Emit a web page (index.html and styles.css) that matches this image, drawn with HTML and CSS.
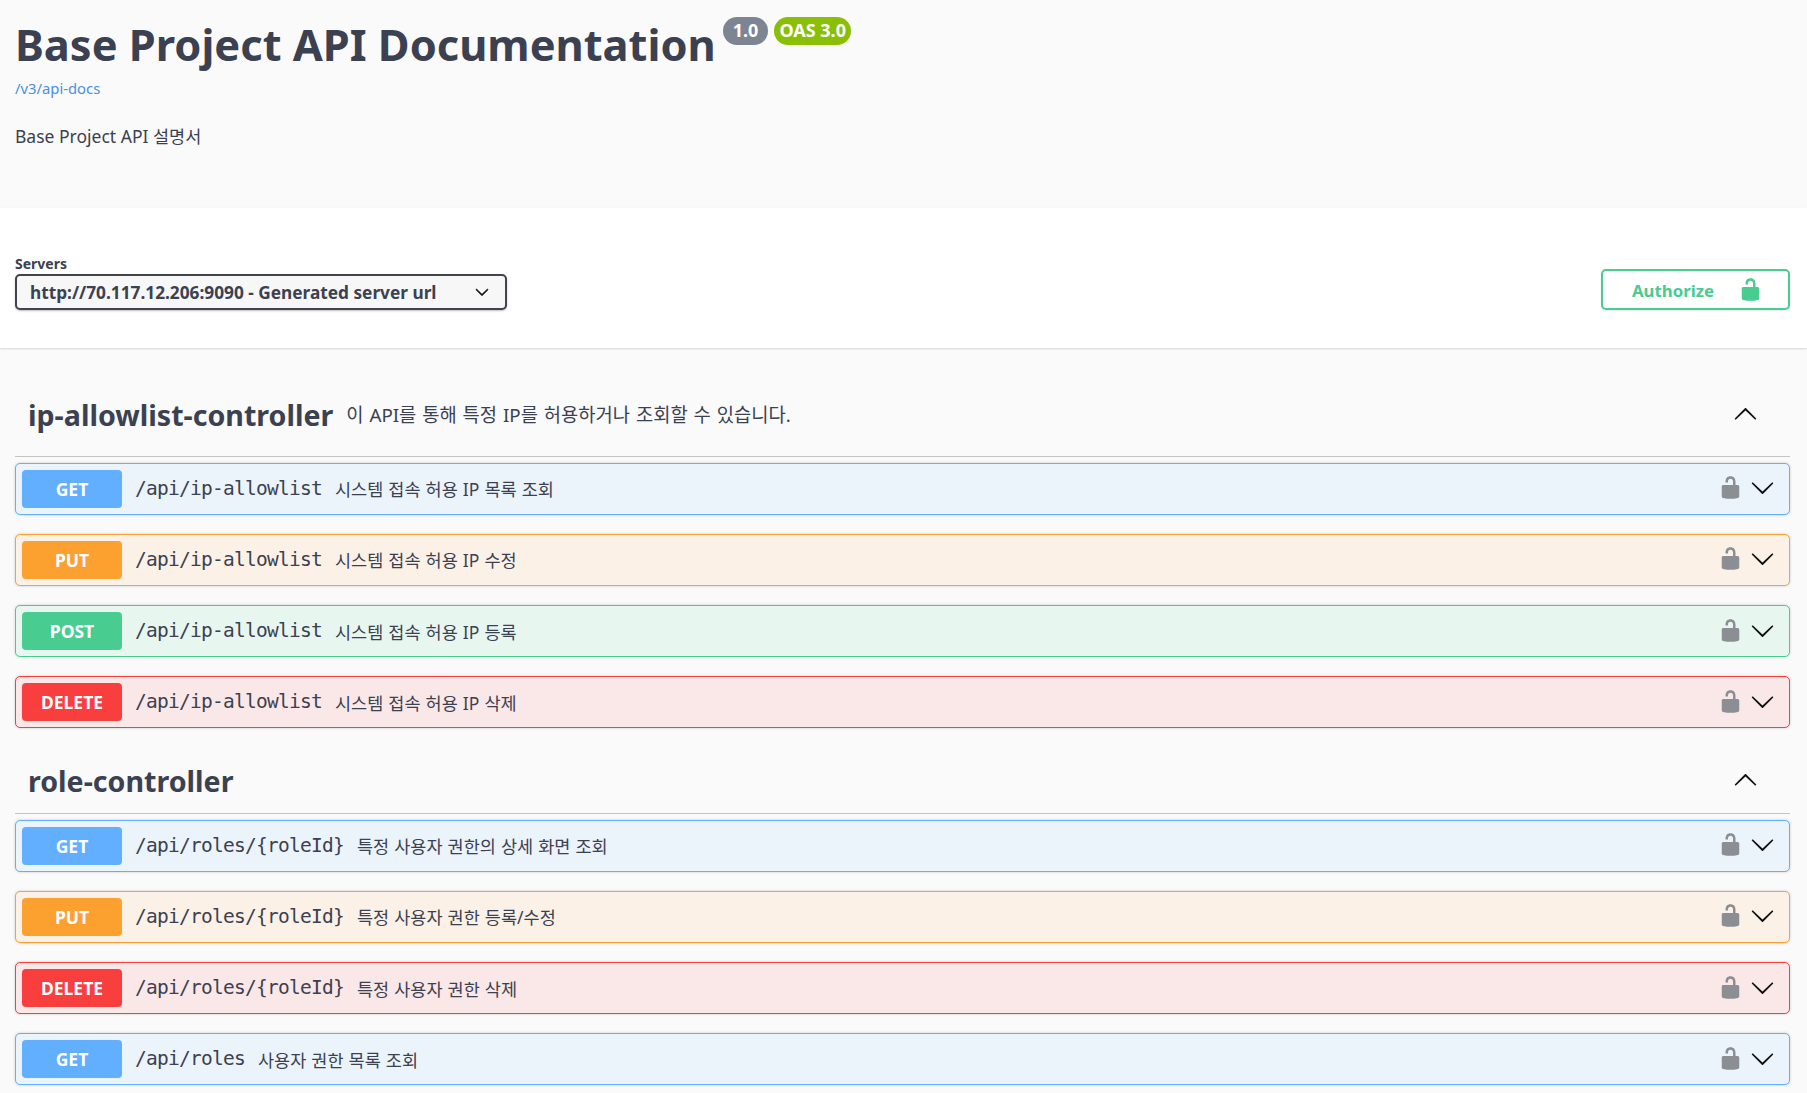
FILE: index.html
```html
<!DOCTYPE html>
<html lang="ko">
<head>
    <meta charset="UTF-8">
    <title>Base Project API Documentation</title>
    <link rel="stylesheet" href="styles.css">
</head>
<body>
    <svg class="icon-defs" width="0" height="0">
        <symbol id="unlocked" viewBox="0 0 20 20">
            <path d="M15.8 8H14V5.6C14 2.703 12.665 1 10 1 7.334 1 6 2.703 6 5.6V6h2v-.801C8 3.754 8.797 3 10 3c1.203 0 2 .754 2 2.199V8H4c-.553 0-1 .646-1 1.199V17c0 .549.428 1.139.951 1.307l1.197.387C5.672 18.861 6.55 19 7.1 19h5.8c.549 0 1.428-.139 1.951-.307l1.196-.387c.524-.167.953-.757.953-1.306V9.199C17 8.646 16.352 8 15.8 8z"/>
        </symbol>
        <symbol id="arrow-down" viewBox="0 0 20 20">
            <path d="M17.418 6.109c.272-.268.709-.268.979 0s.271.701 0 .969l-7.908 7.83c-.27.268-.707.268-.979 0l-7.908-7.83c-.27-.268-.27-.701 0-.969.271-.268.709-.268.979 0L10 13.25l7.418-7.141z"/>
        </symbol>
    </svg>

    <section class="info">
        <div class="title-row">
            <h1>Base Project API Documentation</h1>
            <span class="badge version">1.0</span>
            <span class="badge oas">OAS 3.0</span>
        </div>
        <a class="docs-link" href="#">/v3/api-docs</a>
        <p class="info-desc">Base Project API 설명서</p>
    </section>

    <section class="scheme">
        <div class="servers">
            <label class="servers-label">Servers</label>
            <div class="server-select">
                <span>http://70.117.12.206:9090 - Generated server url</span>
                <svg class="select-arrow"><use href="#arrow-down"/></svg>
            </div>
        </div>
        <button class="authorize">
            <span>Authorize</span>
            <svg class="auth-lock"><use href="#unlocked"/></svg>
        </button>
    </section>

    <main class="wrapper">
        <div class="tag">
            <h3 class="tag-name">ip-allowlist-controller</h3>
            <span class="tag-desc">이 API를 통해 특정 IP를 허용하거나 조회할 수 있습니다.</span>
            <svg class="tag-arrow"><use href="#arrow-down"/></svg>
        </div>
        <div class="op get">
            <span class="method">GET</span>
            <span class="path">/api/ip-allowlist</span>
            <span class="summary">시스템 접속 허용 IP 목록 조회</span>
            <svg class="lock"><use href="#unlocked"/></svg>
            <svg class="arrow"><use href="#arrow-down"/></svg>
        </div>
        <div class="op put">
            <span class="method">PUT</span>
            <span class="path">/api/ip-allowlist</span>
            <span class="summary">시스템 접속 허용 IP 수정</span>
            <svg class="lock"><use href="#unlocked"/></svg>
            <svg class="arrow"><use href="#arrow-down"/></svg>
        </div>
        <div class="op post">
            <span class="method">POST</span>
            <span class="path">/api/ip-allowlist</span>
            <span class="summary">시스템 접속 허용 IP 등록</span>
            <svg class="lock"><use href="#unlocked"/></svg>
            <svg class="arrow"><use href="#arrow-down"/></svg>
        </div>
        <div class="op delete">
            <span class="method">DELETE</span>
            <span class="path">/api/ip-allowlist</span>
            <span class="summary">시스템 접속 허용 IP 삭제</span>
            <svg class="lock"><use href="#unlocked"/></svg>
            <svg class="arrow"><use href="#arrow-down"/></svg>
        </div>

        <div class="tag tag-second">
            <h3 class="tag-name">role-controller</h3>
            <svg class="tag-arrow"><use href="#arrow-down"/></svg>
        </div>
        <div class="op get">
            <span class="method">GET</span>
            <span class="path">/api/roles/{roleId}</span>
            <span class="summary">특정 사용자 권한의 상세 화면 조회</span>
            <svg class="lock"><use href="#unlocked"/></svg>
            <svg class="arrow"><use href="#arrow-down"/></svg>
        </div>
        <div class="op put">
            <span class="method">PUT</span>
            <span class="path">/api/roles/{roleId}</span>
            <span class="summary">특정 사용자 권한 등록/수정</span>
            <svg class="lock"><use href="#unlocked"/></svg>
            <svg class="arrow"><use href="#arrow-down"/></svg>
        </div>
        <div class="op delete">
            <span class="method">DELETE</span>
            <span class="path">/api/roles/{roleId}</span>
            <span class="summary">특정 사용자 권한 삭제</span>
            <svg class="lock"><use href="#unlocked"/></svg>
            <svg class="arrow"><use href="#arrow-down"/></svg>
        </div>
        <div class="op get">
            <span class="method">GET</span>
            <span class="path">/api/roles</span>
            <span class="summary">사용자 권한 목록 조회</span>
            <svg class="lock"><use href="#unlocked"/></svg>
            <svg class="arrow"><use href="#arrow-down"/></svg>
        </div>
    </main>
</body>
</html>
```

FILE: styles.css
```css
body {
    font-family: "Noto Sans", "Noto Sans CJK KR", sans-serif;
    background: #fafafa;
    color: #3b4151;
    margin: 0;
    padding: 0;
}

.icon-defs {
    position: absolute;
}

.info {
    height: 208px;
    box-sizing: border-box;
    padding: 14px 17px 0 15px;
}

.title-row {
    display: flex;
    align-items: flex-start;
    gap: 6px;
}

h1 {
    margin: 0;
    font-size: 43.4px;
    line-height: 62px;
    font-weight: 700;
}

.badge {
    margin-top: 3px;
    height: 28px;
    line-height: 27px;
    padding: 0 5px;
    border-radius: 14px;
    font-size: 18px;
    font-weight: 700;
    color: #fff;
}

.version {
    background: #7d8492;
    padding: 0 10px;
    margin-left: 1px;
}

.oas {
    background: #89bf04;
}

.docs-link {
    display: block;
    margin-top: 2px;
    font-size: 14.8px;
    line-height: 20px;
    color: #4990e2;
    text-decoration: none;
}

.info-desc {
    margin: 26px 0 0;
    font-size: 17.5px;
    line-height: 24px;
}

.scheme {
    height: 140px;
    box-sizing: border-box;
    background: #fff;
    box-shadow: 0 1px 2px rgba(0, 0, 0, 0.15);
    padding: 46px 17px 0 15px;
    display: flex;
    justify-content: space-between;
    align-items: flex-start;
}

.servers-label {
    display: block;
    font-size: 14px;
    line-height: 19px;
    font-weight: 700;
    margin-bottom: 1px;
}

.server-select {
    width: 492px;
    height: 36px;
    box-sizing: border-box;
    display: flex;
    align-items: center;
    justify-content: space-between;
    padding: 0 16px 0 13px;
    border: 2px solid #41444e;
    border-radius: 5px;
    background: #f7f7f7;
    box-shadow: 0 1px 2px 0 rgba(0, 0, 0, 0.25);
    font-size: 17.25px;
    font-weight: 700;
}

.select-arrow {
    width: 14px;
    height: 14px;
    fill: #111;
    stroke: #111;
    stroke-width: 1;
}

.authorize {
    margin-top: 15px;
    width: 189px;
    height: 41px;
    display: flex;
    align-items: center;
    justify-content: flex-end;
    gap: 24px;
    padding: 0 27px 0 0;
    border: 2px solid #49cc90;
    border-radius: 5px;
    background: transparent;
    box-shadow: 0 1px 2px rgba(0, 0, 0, 0.1);
    color: #49cc90;
    font-family: inherit;
    font-size: 16.8px;
    line-height: 24px;
    font-weight: 700;
}

.authorize span {
    margin-top: 2px;
}

.auth-lock {
    width: 25px;
    height: 25px;
    fill: #49cc90;
    margin-right: -2px;
}

.wrapper {
    padding: 0 17px 0 15px;
}

.tag {
    height: 109px;
    box-sizing: border-box;
    display: flex;
    align-items: center;
    padding: 24px 12px 0 13px;
    border-bottom: 1px solid #c4c4c4;
    margin-bottom: 5.5px;
}

.tag-second {
    height: 66px;
    padding-top: 0;
    margin-top: 17.5px;
    margin-bottom: 6px;
}

.tag-name {
    margin: 0;
    font-size: 28.6px;
    font-weight: 700;
}

.tag-desc {
    margin-left: 13px;
    margin-bottom: 2px;
    font-size: 18.75px;
    word-spacing: 1px;
}

.tag-arrow {
    width: 25px;
    height: 25px;
    margin-left: auto;
    margin-right: 20px;
    transform: rotate(180deg);
    fill: #111;
}

.op {
    height: 52px;
    box-sizing: border-box;
    display: flex;
    align-items: center;
    padding: 0 14px 0 6px;
    margin-bottom: 19.25px;
    border: 1px solid;
    border-radius: 5px;
    box-shadow: 0 0 3px rgba(0, 0, 0, 0.19);
}

.method {
    width: 100px;
    height: 38px;
    line-height: 38px;
    flex: none;
    text-align: center;
    border-radius: 4px;
    color: #fff;
    font-size: 17.5px;
    font-weight: 700;
}

.path {
    margin-left: 13px;
    margin-bottom: 1px;
    font-family: "DejaVu Sans Mono", monospace;
    font-size: 19.5px;
    letter-spacing: -0.74px;
}

.summary {
    margin-left: 13px;
    font-size: 17.5px;
    word-spacing: 0.5px;
}

.lock {
    margin-left: auto;
    width: 25px;
    height: 25px;
    margin-top: -2px;
    fill: #8b8e93;
}

.arrow {
    width: 25px;
    height: 25px;
    margin-left: 7px;
    margin-top: -2px;
    fill: #111;
}

.get { background: #ebf3fb; border-color: #61affe; }
.get .method { background: #61affe; }

.put { background: #fbf1e6; border-color: #fca130; }
.put .method { background: #fca130; }

.post { background: #e8f6f0; border-color: #49cc90; }
.post .method { background: #49cc90; }

.delete { background: #fae7e7; border-color: #f93e3e; }
.delete .method { background: #f93e3e; }
```
